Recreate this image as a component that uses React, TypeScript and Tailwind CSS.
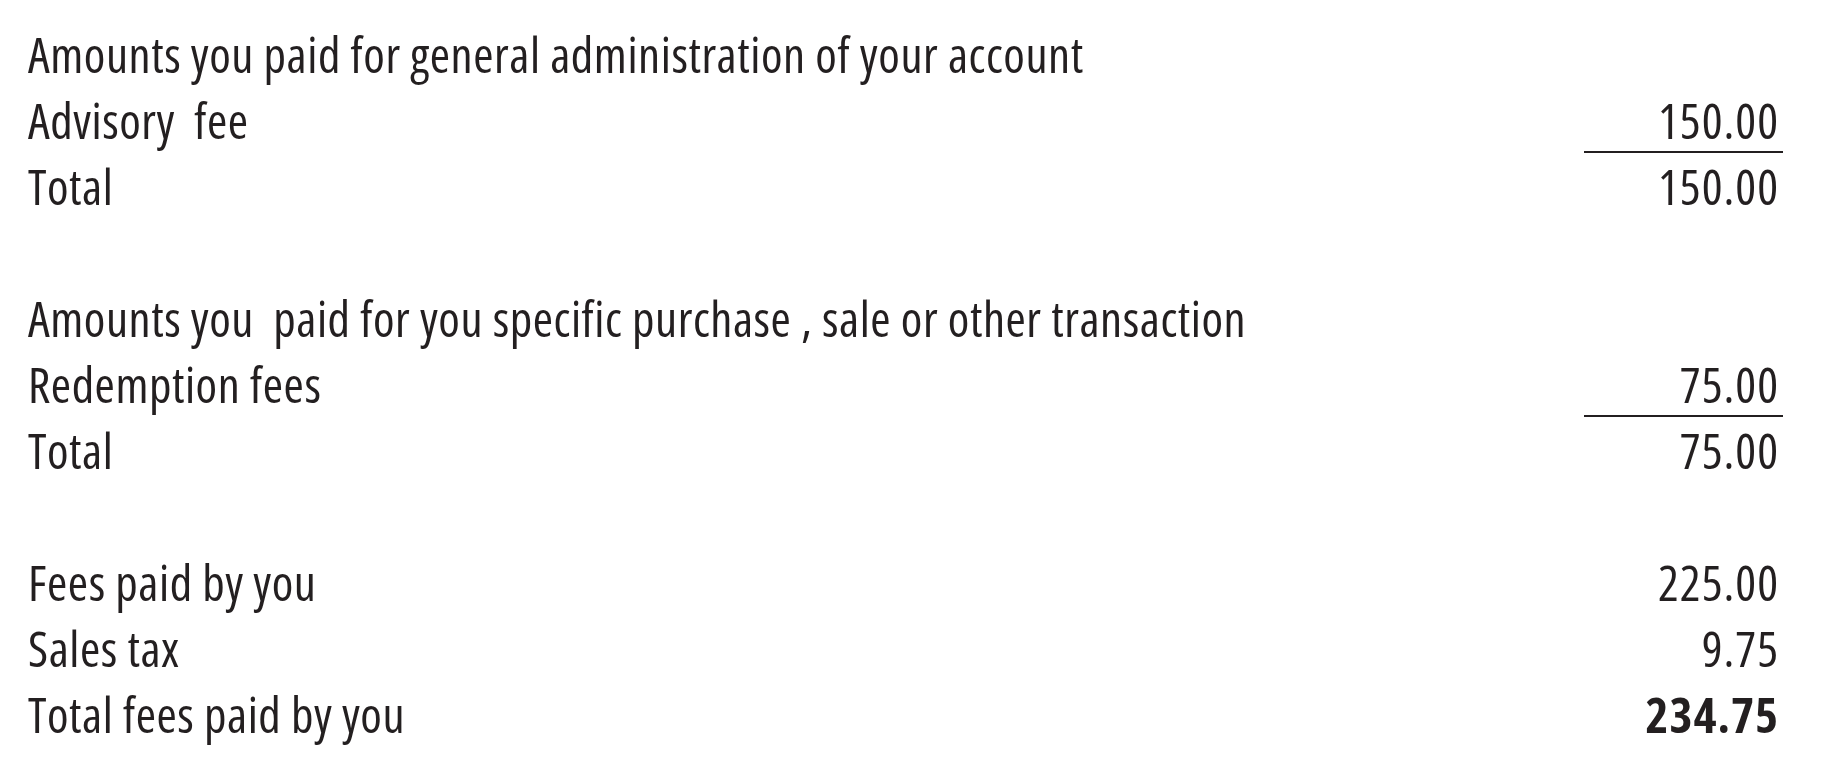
type Row = { label: string; amount?: string; rule?: boolean; bold?: boolean }

const sections: Row[][] = [
  [
    { label: "Amounts you paid for general administration of your account" },
    { label: "Advisory  fee", amount: "150.00", rule: true },
    { label: "Total", amount: "150.00" },
  ],
  [
    { label: "Amounts you  paid for you specific purchase , sale or other transaction" },
    { label: "Redemption fees", amount: "75.00", rule: true },
    { label: "Total", amount: "75.00" },
  ],
  [
    { label: "Fees paid by you", amount: "225.00" },
    { label: "Sales tax", amount: "9.75" },
    { label: "Total fees paid by you", amount: "234.75", bold: true },
  ],
]

function FeeRow({ row }: { row: Row }) {
  return (
    <div className="flex items-start justify-between h-[66px] leading-[66px]">
      <span className="whitespace-pre">{row.label}</span>
      {row.amount && (
        <div
          className={`w-[199px] h-[66px] pr-[4px] text-right tracking-[1px] ${
            row.rule ? "border-b-2 border-[#231f20]" : ""
          } ${row.bold ? "font-bold tracking-[0.5px]" : ""}`}
        >
          {row.amount}
        </div>
      )}
    </div>
  )
}

export default function App() {
  return (
    <div className="w-[1824px] h-[776px] bg-white pt-[21px] pl-[28px] pr-[41px] font-['Open_Sans',sans-serif] font-normal font-stretch-condensed text-[49px] tracking-[0.55px] text-[#231f20]">
      <div className="flex flex-col gap-[66px]">
        {sections.map((rows, i) => (
          <div key={i} className="flex flex-col">
            {rows.map((row, j) => (
              <FeeRow key={j} row={row} />
            ))}
          </div>
        ))}
      </div>
    </div>
  )
}
